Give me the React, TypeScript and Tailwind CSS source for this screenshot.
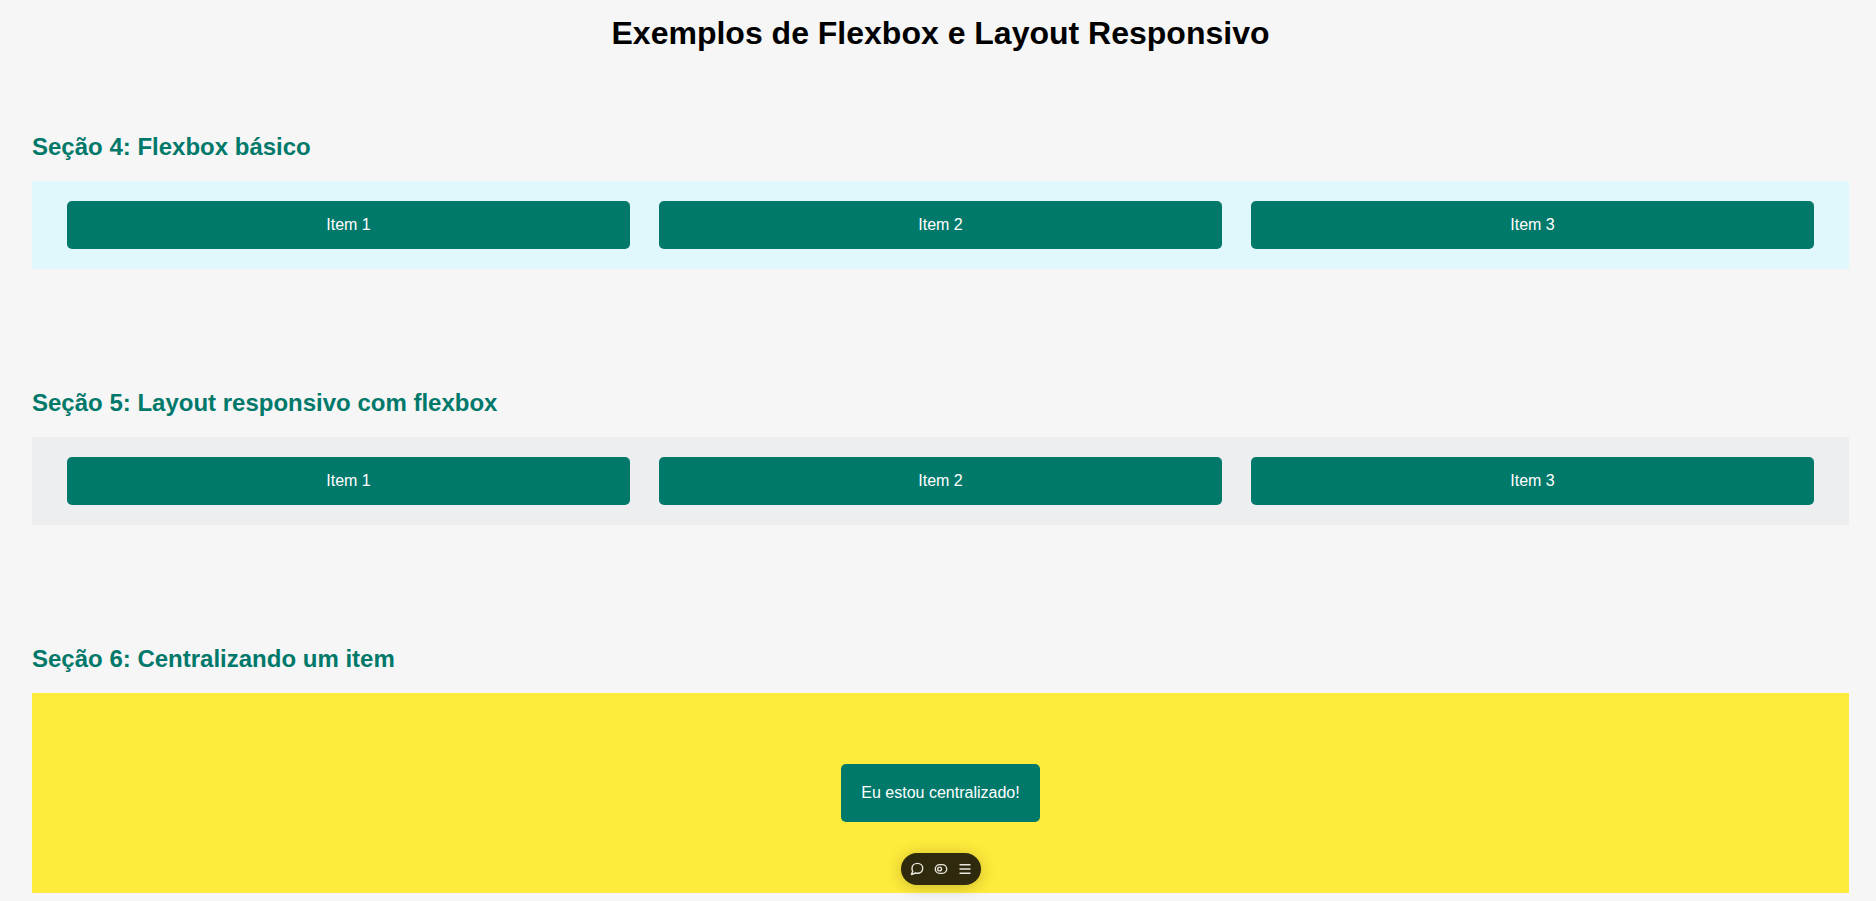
const items = ["Item 1", "Item 2", "Item 3"];

function SectionTitle({ children }: { children: string }) {
  return <h2 className="mb-5 text-2xl leading-7 font-bold text-[#00796b]">{children}</h2>;
}

function Row({ title, background }: { title: string; background: string }) {
  return (
    <section className="py-12">
      <SectionTitle>{title}</SectionTitle>
      <div className={`flex gap-[29px] px-[35px] py-5 ${background}`}>
        {items.map((item) => (
          <div key={item} className="flex-1 rounded-[5px] bg-[#00796b] p-[15px] text-center leading-[18px] text-white">
            {item}
          </div>
        ))}
      </div>
    </section>
  );
}

const toolButton = "flex size-6 cursor-pointer items-center justify-center rounded-full";

function Toolbar() {
  return (
    <div className="pointer-events-none fixed right-[27px] bottom-4 left-8 flex justify-center">
      <div
        role="toolbar"
        className="pointer-events-auto flex h-8 w-20 items-center justify-center rounded-full bg-[#2f2a0e] text-[#e8e6dc] shadow-[0_2px_16px_rgba(0,0,0,0.22)]"
      >
        <button type="button" aria-label="Comentar" className={toolButton}>
          <svg width="14" height="14" viewBox="0 0 14 14" fill="none" stroke="currentColor" strokeWidth="1.4" strokeLinejoin="round">
            <path d="M7.4 1.4c3 0 5.3 2.1 5.3 4.9 0 2.9-2.3 5-5.3 5-.7 0-1.4-.1-2-.3L1.4 12.6l1.3-3.3c-.4-.8-.7-1.8-.7-2.9 0-2.900 2.400-5 5.400-5Z" />
          </svg>
        </button>
        <button type="button" aria-label="Visualizar" className={toolButton}>
          <svg width="14" height="14" viewBox="0 0 14 14" fill="none" stroke="currentColor" strokeWidth="1.4">
            <rect x="1.3" y="2.6" width="11.4" height="8.800" rx="4.4" />
            <circle cx="5.6" cy="7" r="1.900" />
          </svg>
        </button>
        <button type="button" aria-label="Menu" className={toolButton}>
          <svg width="14" height="14" viewBox="0 0 14 14" fill="none" stroke="currentColor" strokeWidth="1.4">
            <path d="M1.500 2.700h11M1.500 7h11M1.500 11.300h11" />
          </svg>
        </button>
      </div>
    </div>
  );
}

export default function App() {
  return (
    <div className="min-h-screen bg-[#f6f6f6] pr-[27px] pl-8 font-['Liberation_Sans',Arial,sans-serif] text-base text-black">
      <h1 className="pt-[14px] text-center text-[32px] leading-[38px] font-bold">Exemplos de Flexbox e Layout Responsivo</h1>
      <main className="flex flex-col gap-6 pt-[33px]">
        <Row title="Seção 4: Flexbox básico" background="bg-[#e0f7fc]" />
        <Row title="Seção 5: Layout responsivo com flexbox" background="bg-[#eceef0]" />
        <section className="pt-12">
          <SectionTitle>Seção 6: Centralizando um item</SectionTitle>
          <div className="flex h-[200px] items-center justify-center bg-[#ffeb3b]">
            <div className="rounded-[5px] bg-[#00796b] p-5 leading-[18px] text-white">Eu estou centralizado!</div>
          </div>
        </section>
      </main>
      <Toolbar />
    </div>
  );
}
